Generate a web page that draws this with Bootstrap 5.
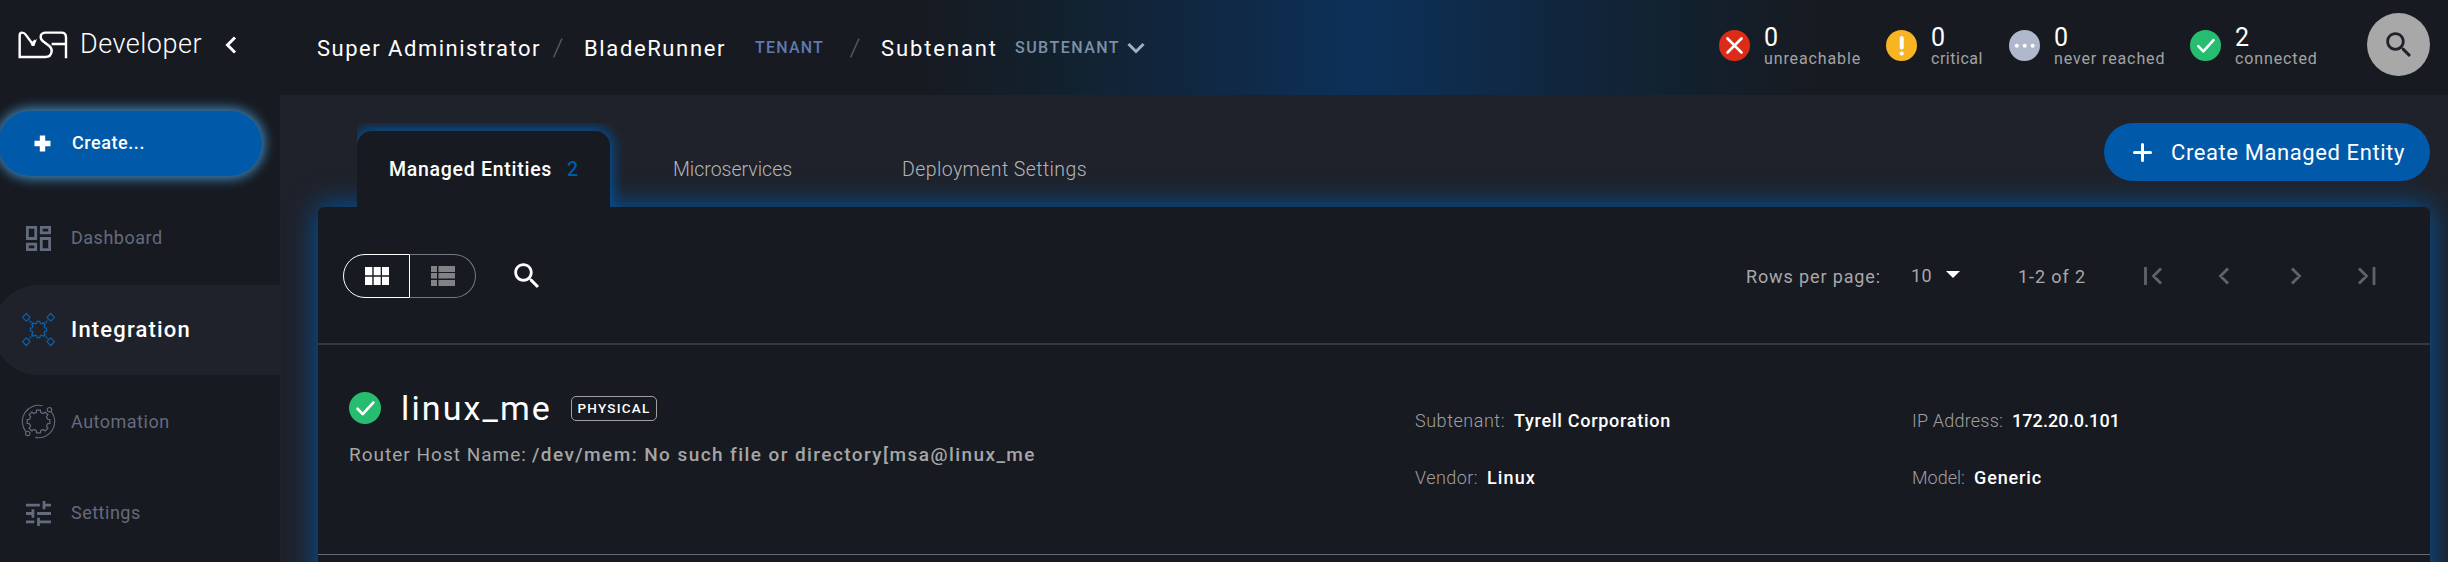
<!DOCTYPE html>
<html lang="en">
<head>
<meta charset="utf-8">
<meta name="viewport" content="width=device-width, initial-scale=1">
<title>MSA Developer</title>
<link href="https://cdn.jsdelivr.net/npm/bootstrap@5.3.0/dist/css/bootstrap.min.css" rel="stylesheet">
<style>
body{background:#1f222a;color:#fff;font-family:Roboto,"Liberation Sans",sans-serif;overflow:hidden}
.app-shell{height:562px;overflow:hidden}
.app-shell span{white-space:nowrap;display:block}
.side-bar{width:280px;background:#171a21}
.brand-row{height:95px;padding:0 0 6px 18px}
.brand-name{font-size:27px;font-weight:300;width:122px;margin:0 23px 0 11px;letter-spacing:.5px}
.create-pill{width:264px;height:65px;margin:16px 0 0 -2px;padding-left:36px;border-radius:33px;background:#0059a9;box-shadow:0 0 12px 3px #4186b8}
.create-pill span{font-size:18px;font-weight:500;width:73px;margin:-2px 0 0 21px;letter-spacing:.56px}
.side-nav{margin-top:17.4px;gap:1.6px}
.side-link{height:90px;padding-left:21px;color:#646b7d;font-size:18px;letter-spacing:.5px}
.side-link svg{width:35px;height:35px;margin-right:15px}
.side-link span{margin-top:-1px}
.side-link.current{background:#1f222a;color:#fff;font-size:22px;font-weight:500;letter-spacing:1.18px;border-radius:45px 0 0 45px;margin-left:-7px;padding-left:28px}
.top-bar{height:95px;padding:1px 18px 0 37px;background:#171a21 linear-gradient(90deg,transparent 640px,#12212e 780px,#102843 930px,#0c3159 1084px,#102843 1240px,#12212e 1400px,transparent 1540px)}
.crumb{font-size:22px}
.w-super{width:224px;letter-spacing:1.5px}
.w-blade{width:142px;margin:0 29px 0 15px;letter-spacing:1.62px}
.w-subt{width:117px;margin:0 17px 0 21px;letter-spacing:1.9px}
.crumb-tag{font-size:16px;font-weight:500;color:#6079b0}
.w-tenant{width:69px;margin-right:25px;letter-spacing:1.21px}
.crumb-tag.sub{color:#7c90a6;width:105px;margin-right:7px;letter-spacing:1.47px}
.stat-num{font-size:25px;line-height:22px;width:16px}
.stat-label{font-size:16px;line-height:20px;color:#a3a3a3;letter-spacing:.88px}
.stat-item{gap:14px}
.stat-item svg{margin-bottom:5px}
.w-unr{width:97px;margin-right:25px}
.w-crit{width:52px;margin-right:26px;letter-spacing:.53px}
.w-nev{width:111px;margin-right:25px}
.w-con{width:83px;margin-right:49px}
.search-disc{width:63px;height:63px;background:#a8a8a8;margin-bottom:7px}
.tab-bar{height:112px;padding:0 18px 0 77px}
.tab-item{height:76px;padding-top:2px;font-size:19.5px;font-weight:300;color:#b4b6b9}
.tab-item.current{width:253px;padding-left:32px;background:#171a21;color:#fff;font-weight:500;border-radius:15px 15px 0 0;box-shadow:0 0 14px 2px #0059a9;clip-path:inset(-8px -14px 0 0);position:relative;z-index:2}
.w-man{width:163px;margin-right:15px;letter-spacing:.72px}
.w-two{width:13px;color:#0059a9}
.w-mic{width:119px;margin-left:63px}
.w-dep{width:185px;margin-left:110px;letter-spacing:.41px}
.entity-btn{width:326px;height:58px;margin-top:28px;padding-left:29px;border-radius:29px;background:#0059a9;font-size:22px;letter-spacing:.59px}
.w-ent{width:234px;margin-left:19px}
.entity-panel{height:500px;margin:0 18px 0 38px;background:#171a21;border-radius:6px 6px 0 0;box-shadow:0 0 30px #0059a9}
.tool-row{height:138px;border-bottom:2px solid #35383d;padding:2px 52px 0 25px;color:#a8a8a8;font-size:18px}
.view-on{width:67px;height:44px;border:1px solid #fff;border-radius:22px 0 0 22px}
.view-off{width:66px;height:44px;border:1px solid #77797c;border-left:0;border-radius:0 22px 22px 0}
.find-icon{margin-left:34px}
.w-rows{width:135px;margin-right:30px;letter-spacing:.87px}
.w-ten{width:21px;margin:-2px 14px 0 0;letter-spacing:.38px}
.w-range{width:68px;margin:0 58px 0 58px;letter-spacing:.9px}
.entity-row{height:210px;border-bottom:1px solid #626a7a}
.entity-main{width:1097px;padding:41px 0 0 31px}
.entity-head{height:44px}
.entity-name{font-size:34px;width:151px;margin:0 19px 0 20px;letter-spacing:2.11px}
.kind-tag{width:86px;height:25px;border:1px solid #a0a0a0;border-radius:5px;font-size:13.5px;font-weight:500}
.w-phys{width:73px;letter-spacing:1.22px}
.host-line{margin-top:13px;height:24px;font-size:19px;color:#a6a6a6}
.w-rhn{width:178px;margin-right:5px;letter-spacing:1.01px}
.w-host{width:504px;font-weight:500;letter-spacing:1.42px}
.entity-info{width:497px;padding-top:63px;gap:33px;font-size:18px}
.info-line{height:24px;gap:9px}
.info-key{color:#a0a0a0;font-weight:300}
.info-val{font-weight:500}
.w-k1{width:90px;letter-spacing:.53px}
.w-v1{width:157px;letter-spacing:.73px}
.w-k2{width:63px;letter-spacing:.45px}
.w-v2{width:49px;letter-spacing:1.12px}
.w-k3{width:91px;letter-spacing:.2px}
.w-v3{width:108px;letter-spacing:.08px}
.w-k4{width:53px}
.w-v4{width:68px;letter-spacing:.87px}
</style>
</head>
<body>
<svg class="d-none"><defs>
<polygon id="gear" points="6.4,-1.6 8.1,-1.4 8.1,1.4 6.4,1.6 5.66,3.39 6.72,4.74 4.74,6.72 3.39,5.66 1.6,6.4 1.4,8.1 -1.4,8.1 -1.6,6.4 -3.39,5.66 -4.74,6.72 -6.72,4.74 -5.66,3.39 -6.4,1.6 -8.1,1.4 -8.1,-1.4 -6.4,-1.6 -5.66,-3.39 -6.72,-4.74 -4.74,-6.72 -3.39,-5.66 -1.6,-6.4 -1.4,-8.1 1.4,-8.1 1.6,-6.4 3.39,-5.66 4.74,-6.72 6.72,-4.74 5.66,-3.39"/>
<path id="lens" d="M15.5 14h-.79l-.28-.27C15.41 12.59 16 11.11 16 9.5 16 5.91 13.09 3 9.5 3S3 5.91 3 9.5 5.91 16 9.5 16c1.61 0 3.09-.59 4.23-1.57l.27.28v.79l5 4.99L20.49 19l-4.99-5zm-6 0C7.01 14 5 11.99 5 9.5S7.01 5 9.5 5 14 7.01 14 9.5 11.99 14 9.5 14z"/>
<g id="okay"><circle cx="15.5" cy="15.5" r="15.5" fill="#27bd70"/><path d="M8.3 16.2l5 5.2L23.5 10.2" fill="none" stroke="#fff" stroke-width="2.6" stroke-linecap="round" stroke-linejoin="round"/></g>
</defs></svg>
<div class="app-shell d-flex">
  <aside class="side-bar flex-shrink-0">
    <div class="brand-row d-flex align-items-center">
      <svg width="51" height="28" viewBox="56 89 153 84" fill="none" stroke="#fff" stroke-width="7.2"><path d="M200 171V108Q200 94 186 94H140Q124 94 124 107Q124 116 134 122L150 134Q158 141 157 150Q155 167 138 167H61V103Q61 94 68 94Q75 94 79 100L99 127L108 117M157 128H200"/><path d="M92 117l9 6 12-11-8 22h-8z" fill="#fff" stroke="none"/></svg>
      <span class="brand-name">Developer</span>
      <svg width="12" height="18" viewBox="0 0 12 18" fill="none" stroke="#fff" stroke-width="3"><path d="M10 1.5L2.5 9l7.5 7.5"/></svg>
    </div>
    <div class="create-pill d-flex align-items-center">
      <svg width="17" height="17" viewBox="0 0 17 17" stroke="#fff" stroke-width="5.4"><path d="M8.5 .5v16M.5 8.5h16"/></svg>
      <span>Create...</span>
    </div>
    <nav class="side-nav d-flex flex-column">
      <div class="side-link d-flex align-items-center"><svg viewBox="-.6 -.6 25.2 25.2" fill="currentColor"><path d="M19 5v2h-4V5h4M9 5v6H5V5h4m10 8v6h-4v-6h4M9 17v2H5v-2h4M21 3h-8v6h8V3zM11 3H3v10h8V3zm10 8h-8v10h8V11zm-10 4H3v6h8v-6z"/></svg><span>Dashboard</span></div>
      <div class="side-link current d-flex align-items-center"><svg viewBox="-17.5 -17.5 35 35" fill="none" stroke="#0a60ac" stroke-width="1.2"><use href="#gear"/><path d="M5.500-5.500l4-4M-5.500-5.500l-4-4M5.500 5.500l4 4M-5.500 5.500l-4 4" stroke-width="2" stroke-dasharray="1.5 1"/><path d="M12.200-16l3.800 3.800-3.800 3.800-3.800-3.800zM-12.200-16l3.800 3.800-3.800 3.800-3.800-3.800zM12.200 8.400l3.800 3.800-3.800 3.800-3.800-3.800zM-12.200 8.400l3.800 3.800-3.800 3.800-3.800-3.800z" stroke-linejoin="round"/></svg><span>Integration</span></div>
      <div class="side-link d-flex align-items-center"><svg viewBox="-17.5 -17.5 35 35" fill="none" stroke="currentColor" stroke-width="1.1"><use href="#gear" transform="scale(1.4)" stroke-width=".85"/><path d="M4-15.700A16.200 16.200 0 0 0-12.500 10.300M12.500-10.300A16.200 16.200 0 0 1-3.300 15.900"/><circle cx="11" cy="-11.8" r="2.2"/><circle cx="-10.8" cy="11.9" r="2.2"/></svg><span>Automation</span></div>
      <div class="side-link d-flex align-items-center"><svg viewBox="-.6 -.6 25.2 25.2" fill="currentColor"><path d="M3 17v2h6v-2H3zM3 5v2h10V5H3zm10 16v-2h8v-2h-8v-2h-2v6h2zM7 9v2H3v2h4v2h2V9H7zm14 4v-2H11v2h10zm-6-4h2V7h4V5h-4V3h-2v6z"/></svg><span>Settings</span></div>
    </nav>
  </aside>
  <main class="flex-grow-1">
    <header class="top-bar d-flex align-items-center">
      <span class="crumb w-super">Super Administrator</span>
      <svg class="ms-2" width="20" height="20" viewBox="0 0 20 20" stroke="#53565b" stroke-width="1.6"><path d="M4.500 19.500L13 .5"/></svg>
      <span class="crumb w-blade">BladeRunner</span>
      <span class="crumb-tag w-tenant">TENANT</span>
      <svg width="11" height="20" viewBox="0 0 11 20" stroke="#53565b" stroke-width="1.6"><path d="M1.500 19.500L10 .5"/></svg>
      <span class="crumb w-subt">Subtenant</span>
      <span class="crumb-tag sub">SUBTENANT</span>
      <svg width="18" height="12" viewBox="0 0 18 12" fill="none" stroke="#9fb0c3" stroke-width="3"><path d="M1.500 2L9 9.500 16.500 2"/></svg>
      <div class="d-flex align-items-center ms-auto">
        <div class="stat-item d-flex align-items-center"><svg width="31" height="31" viewBox="0 0 31 31"><circle cx="15.5" cy="15.5" r="15.5" fill="#dc2c18"/><path d="M8.500 8.500l14 14M22.500 8.500l-14 14" stroke="#fff" stroke-width="2.6" stroke-linecap="round"/></svg><div><span class="stat-num">0</span><span class="stat-label w-unr">unreachable</span></div></div>
        <div class="stat-item d-flex align-items-center"><svg width="31" height="31" viewBox="0 0 31 31"><circle cx="15.5" cy="15.5" r="15.5" fill="#f7b523"/><path d="M15.700 8v9.500" stroke="#fff" stroke-width="4" stroke-linecap="round"/><circle cx="15.7" cy="23.5" r="2.1" fill="#fff"/></svg><div><span class="stat-num">0</span><span class="stat-label w-crit">critical</span></div></div>
        <div class="stat-item d-flex align-items-center"><svg width="31" height="31" viewBox="0 0 31 31"><circle cx="15.5" cy="15.5" r="15.5" fill="#b0b9cb"/><g fill="#fff"><circle cx="7.8" cy="15.8" r="2"/><circle cx="15.7" cy="15.8" r="2"/><circle cx="23.6" cy="15.8" r="2"/></g></svg><div><span class="stat-num">0</span><span class="stat-label w-nev">never reached</span></div></div>
        <div class="stat-item d-flex align-items-center"><svg width="31" height="31" viewBox="0 0 31 31"><use href="#okay"/></svg><div><span class="stat-num">2</span><span class="stat-label w-con">connected</span></div></div>
        <div class="search-disc rounded-circle d-flex align-items-center justify-content-center"><svg width="34" height="34" viewBox="0 0 24 24" fill="#1f222a"><use href="#lens"/></svg></div>
      </div>
    </header>
    <div class="tab-bar d-flex align-items-end">
      <div class="tab-item current d-flex align-items-center"><span class="w-man">Managed Entities</span><span class="w-two">2</span></div>
      <div class="tab-item d-flex align-items-center"><span class="w-mic">Microservices</span></div>
      <div class="tab-item d-flex align-items-center"><span class="w-dep">Deployment Settings</span></div>
      <div class="entity-btn d-flex align-items-center align-self-start ms-auto"><svg width="19" height="19" viewBox="0 0 19 19" stroke="#fff" stroke-width="3" stroke-linecap="round"><path d="M9.500 1.500v16M1.500 9.500h16"/></svg><span class="w-ent">Create Managed Entity</span></div>
    </div>
    <section class="entity-panel">
      <div class="tool-row d-flex align-items-center">
        <div class="view-on d-flex align-items-center justify-content-center"><svg width="24" height="18" viewBox="0 0 24 18" fill="#fff"><path d="M0 0h7.300v8.300H0zM8.700 0h7v8.300h-7zM17 0h7v8.300h-7zM0 9.700h7.300V18H0zM8.700 9.700h7V18h-7zM17 9.700h7V18h-7z"/></svg></div>
        <div class="view-off d-flex align-items-center justify-content-center"><svg width="24" height="20" viewBox="0 0 24 20" fill="#808285"><path d="M0 0h6v6H0zM7.500 0H24v6H7.500zM0 7h6v5.500H0zM7.500 7H24v5.500H7.500zM0 14h6v6H0zM7.500 14H24v6H7.500z"/></svg></div>
        <svg class="find-icon me-auto" width="34" height="34" viewBox="0 0 24 24" fill="#fff"><use href="#lens"/></svg>
        <span class="w-rows">Rows per page:</span><span class="w-ten">10</span>
        <svg width="14" height="7" viewBox="0 0 14 7" fill="#fff" class="mb-1"><path d="M0 0h14L7 7z"/></svg>
        <span class="w-range">1-2 of 2</span>
        <svg width="234" height="18" viewBox="0 0 234 18" fill="none" stroke="#606367" stroke-width="2.8"><path d="M1.500 0v18M17 1.500L9.500 9l7.500 7.500M84 1.500L76.500 9l7.500 7.500M148 1.500L155.500 9l-7.500 7.500M215 1.500L222.500 9l-7.500 7.500M230 0v18"/></svg>
      </div>
      <div class="entity-row d-flex">
        <div class="entity-main">
          <div class="entity-head d-flex align-items-center"><svg width="32" height="32" viewBox="0 0 31 31"><use href="#okay"/></svg><span class="entity-name">linux_me</span><div class="kind-tag d-flex align-items-center justify-content-center"><span class="w-phys">PHYSICAL</span></div></div>
          <div class="host-line d-flex align-items-center"><span class="w-rhn">Router Host Name:</span><span class="w-host">/dev/mem: No such file or directory[msa@linux_me</span></div>
        </div>
        <div class="entity-info d-flex flex-column">
          <div class="info-line d-flex align-items-center"><span class="info-key w-k1">Subtenant:</span><span class="info-val w-v1">Tyrell Corporation</span></div>
          <div class="info-line d-flex align-items-center"><span class="info-key w-k2">Vendor:</span><span class="info-val w-v2">Linux</span></div>
        </div>
        <div class="entity-info d-flex flex-column">
          <div class="info-line d-flex align-items-center"><span class="info-key w-k3">IP Address:</span><span class="info-val w-v3">172.20.0.101</span></div>
          <div class="info-line d-flex align-items-center"><span class="info-key w-k4">Model:</span><span class="info-val w-v4">Generic</span></div>
        </div>
      </div>
    </section>
  </main>
</div>
<script src="https://cdn.jsdelivr.net/npm/bootstrap@5.3.0/dist/js/bootstrap.bundle.min.js"></script>
</body>
</html>
